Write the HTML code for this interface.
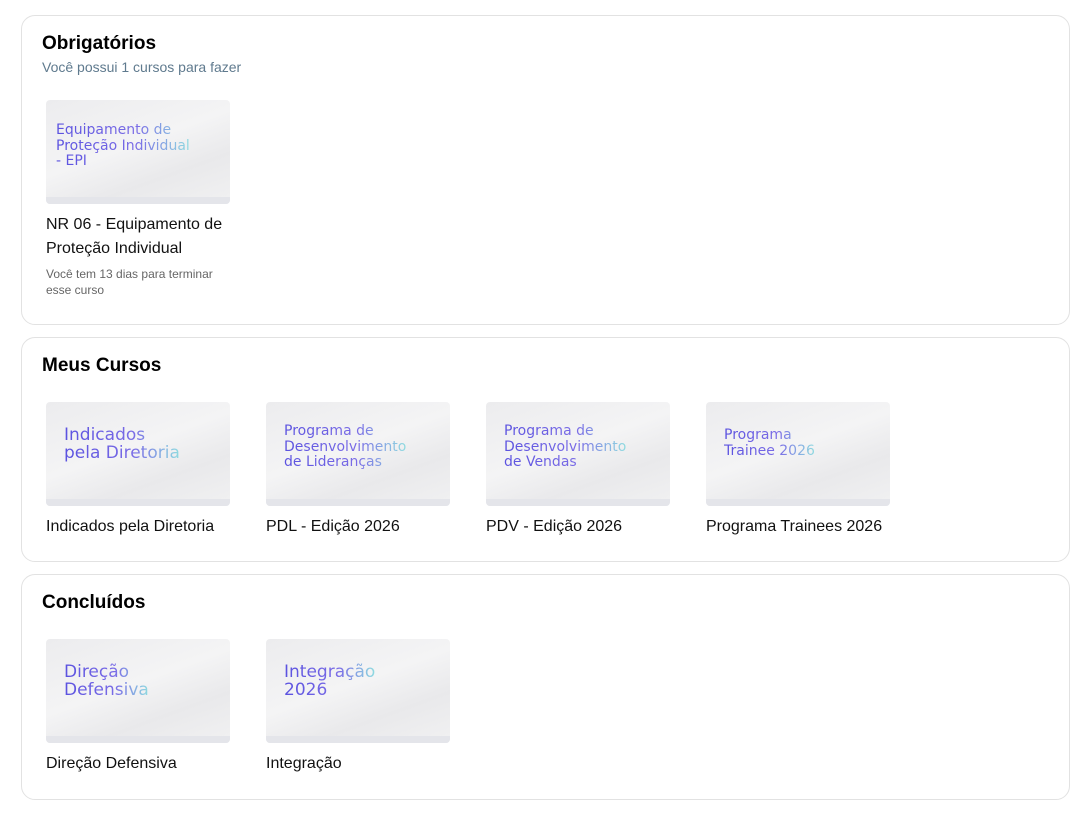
<!DOCTYPE html>
<html><head><meta charset="utf-8"><style>
*{box-sizing:border-box;margin:0;padding:0}
body{width:1083px;height:827px;background:#fff;font-family:"Liberation Sans",Arial,sans-serif;position:relative;overflow:hidden}
.panel{position:absolute;left:21px;width:1049px;border:1px solid #e2e2e2;border-radius:14px;background:#fff}
h2{position:absolute;left:20px;font-size:19px;font-weight:bold;color:#000}
.sub{position:absolute;left:20px;top:43px;font-size:14px;color:#5f7a8e}
.card{position:absolute;width:184px}
.img{width:184px;height:104px;border-radius:4px;background:linear-gradient(160deg,#ececee 0%,#f4f4f5 45%,#e9e9eb 70%,#f1f1f2 100%);position:relative;overflow:hidden}
.img:after{content:"";position:absolute;left:0;right:0;bottom:0;height:7px;background:#e4e5ea}
.img span{position:absolute;left:18px;font-size:15px;line-height:15.5px;font-family:"DejaVu Sans","Liberation Sans",sans-serif;font-size:14px;background:linear-gradient(90deg,#5b52e0 0%,#7a6ce6 60%,#8fdce0 100%);-webkit-background-clip:text;background-clip:text;color:transparent}
.big span{font-size:17px;line-height:18px}
.t{font-size:16px;color:#111;margin-top:9px;line-height:24px}
.s{font-size:12px;color:#666;margin-top:5px;line-height:16px}
</style></head><body>
<div class="panel" style="top:15px;height:310px">
<h2 style="top:17px">Obrigatórios</h2>
<div class="sub">Você possui 1 cursos para fazer</div>
<div class="card" style="left:24px;top:84px">
<div class="img"><span style="top:23px;left:10px">Equipamento de<br>Proteção Individual<br>- EPI</span></div>
<div class="t">NR 06 - Equipamento de<br>Proteção Individual</div>
<div class="s">Você tem 13 dias para terminar<br>esse curso</div>
</div>
</div>
<div class="panel" style="top:337px;height:225px">
<h2 style="top:17px">Meus Cursos</h2>
<div class="card big" style="left:24px;top:64px"><div class="img"><span style="top:24px">Indicados<br>pela Diretoria</span></div><div class="t">Indicados pela Diretoria</div></div>
<div class="card" style="left:244px;top:64px"><div class="img"><span style="top:22px">Programa de<br>Desenvolvimento<br>de Lideranças</span></div><div class="t">PDL - Edição 2026</div></div>
<div class="card" style="left:464px;top:64px"><div class="img"><span style="top:22px">Programa de<br>Desenvolvimento<br>de Vendas</span></div><div class="t">PDV - Edição 2026</div></div>
<div class="card" style="left:684px;top:64px"><div class="img"><span style="top:26px">Programa<br>Trainee 2026</span></div><div class="t">Programa Trainees 2026</div></div>
</div>
<div class="panel" style="top:574px;height:226px">
<h2 style="top:17px">Concluídos</h2>
<div class="card big" style="left:24px;top:64px"><div class="img"><span style="top:24px">Direção<br>Defensiva</span></div><div class="t">Direção Defensiva</div></div>
<div class="card big" style="left:244px;top:64px"><div class="img"><span style="top:24px">Integração<br>2026</span></div><div class="t">Integração</div></div>
</div>
</body></html>
